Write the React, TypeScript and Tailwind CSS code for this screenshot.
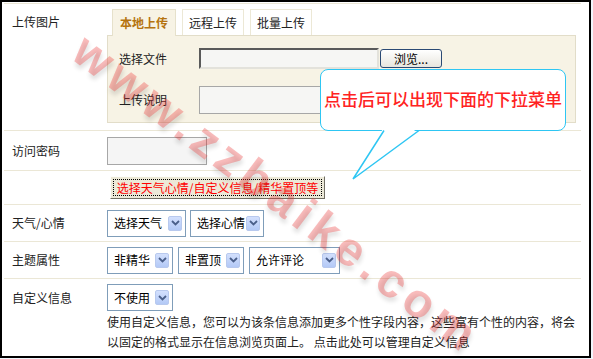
import React from "react";

const cjk = "font-['SimSun','Noto_Sans_CJK_SC',sans-serif]";

function Arrow() {
  return (
    <span className="flex h-[15px] w-[14px] shrink-0 items-center justify-center rounded-[2px] border border-[#b8c9ee] bg-gradient-to-b from-[#d3e0fd] to-[#b3c9f6]">
      <svg width="9" height="6" viewBox="0 0 9 6">
        <path d="M1 1 L4.5 4.5 L8 1" fill="none" stroke="#4a5f8a" strokeWidth="1.8" />
      </svg>
    </span>
  );
}

function Select({ label, w }: { label: string; w: string }) {
  return (
    <div className={`flex h-[27px] shrink-0 items-center justify-between gap-[1px] whitespace-nowrap border border-[#7f9db9] bg-white pl-[6px] pr-[3px] text-[12px] text-black ${w}`}>
      <span>{label}</span>
      <Arrow />
    </div>
  );
}

function Tab({ label, active }: { label: string; active?: boolean }) {
  if (active) {
    return (
      <div className="relative z-10 -mb-px flex h-[27px] items-center border border-b-0 border-[#e6e1cb] bg-[#f7f3e5] px-[7px] text-[12px] font-bold text-[#b5730f]">
        {label}
      </div>
    );
  }
  return (
    <div className="flex h-[26px] items-center border border-b-0 border-[#ece8d6] bg-white px-[6px] text-[12px] text-[#222]">
      {label}
    </div>
  );
}

export default function App() {
  return (
    <div className={`h-[359px] w-[593px] bg-[#f1f5fb] ${cjk}`}>
      <div className="relative h-[358px] w-[591px] overflow-hidden border-2 border-black bg-white pl-[2px] pt-px">
        <div className="w-[577px] border-t border-[#ebe7d6] text-[12px] text-[#222]">
          {/* 上传图片 */}
          <div className="flex border-b border-[#ebe7d6]">
            <div className="w-[103px] pl-[8px] pt-[9px]">上传图片</div>
            <div className="flex flex-col pb-[7px] pt-[5px]">
              <div className="ml-[5px] flex items-end gap-[6px]">
                <Tab label="本地上传" active />
                <Tab label="远程上传" />
                <Tab label="批量上传" />
              </div>
              <div className="flex h-[88px] w-[469px] flex-col gap-[17px] border border-[#e2ddc9] bg-[#f7f3e5] pl-[11px] pt-[12px]">
                <div className="flex items-center">
                  <span className="w-[80px]">选择文件</span>
                  <div className="h-[21px] w-[180px] border-2 border-b-[#e3e2db] border-l-[#5a5a5a] border-r-[#e3e2db] border-t-[#5a5a5a] bg-[#f6f6f4]" />
                  <div className="ml-[1px] flex h-[19px] w-[62px] items-center justify-center rounded-[3px] border border-[#2b4a74] bg-gradient-to-b from-white to-[#e8e6de] text-[12px] text-black">
                    浏览...
                  </div>
                </div>
                <div className="flex items-center">
                  <span className="w-[80px]">上传说明</span>
                  <div className="h-[28px] w-[220px] border border-[#a7a7a7] bg-[#f6f6f4]" />
                </div>
              </div>
            </div>
          </div>

          {/* 访问密码 */}
          <div className="flex h-[40px] items-center border-b border-[#ebe7d6]">
            <div className="w-[103px] pl-[8px]">访问密码</div>
            <div className="h-[28px] w-[100px] border border-[#a7a7a7] bg-[#f5f5f5]" />
          </div>

          {/* button */}
          <div className="flex h-[34px] items-center border-b border-[#ebe7d6]">
            <div className="w-[106px]" />
            <div className="flex h-[23px] w-[215px] items-center justify-center border border-b-[#716f64] border-l-[#fdfdfb] border-r-[#716f64] border-t-[#fdfdfb] bg-[#ece9d8] p-[2px]">
              <div className="flex h-full w-full items-center justify-center whitespace-nowrap border border-dotted border-black text-[12px] text-[#ff0000]">
                选择天气心情/自定义信息/精华置顶等
              </div>
            </div>
          </div>

          {/* 天气/心情 */}
          <div className="flex h-[37px] items-center border-b border-[#ebe7d6]">
            <div className="w-[103px] pl-[8px]">天气/心情</div>
            <div className="flex gap-[4px]">
              <Select label="选择天气" w="w-[79px]" />
              <Select label="选择心情" w="w-[74px]" />
            </div>
          </div>

          {/* 主题属性 */}
          <div className="flex h-[37px] items-center border-b border-[#ebe7d6]">
            <div className="w-[103px] pl-[8px]">主题属性</div>
            <div className="flex gap-[5px]">
              <Select label="非精华" w="w-[66px]" />
              <Select label="非置顶" w="w-[66px]" />
              <Select label="允许评论" w="w-[91px]" />
            </div>
          </div>

          {/* 自定义信息 */}
          <div className="flex flex-col pt-[5px]">
            <div className="flex items-center">
              <div className="w-[103px] pl-[8px]">自定义信息</div>
              <Select label="不使用" w="w-[66px]" />
            </div>
            <p className="ml-[103px] mt-[1px] whitespace-nowrap text-[12px] leading-[20px] text-[#222]">
              使用自定义信息，您可以为该条信息添加更多个性字段内容，这些富有个性的内容，将会
              <br />
              以固定的格式显示在信息浏览页面上。 点击此处可以管理自定义信息
            </p>
          </div>
        </div>

        {/* watermark */}
        <div className="pointer-events-none absolute left-[275px] top-[192px] -translate-x-1/2 -translate-y-1/2 rotate-[37deg] whitespace-nowrap font-['Liberation_Sans',sans-serif] text-[48px] font-bold tracking-[6px] text-[rgba(238,50,50,0.32)] [text-shadow:3px_3px_4px_rgba(0,0,0,0.12)]">
          www.zzbaike.com
        </div>

        {/* callout */}
        <div className="absolute left-[318px] top-[67px] flex h-[62px] w-[246px] items-center justify-center rounded-[8px] border-[1.5px] border-[#2ec6f3] bg-white pb-[2px] text-[17px] font-medium text-[#ff2222]">
          点击后可以出现下面的下拉菜单
        </div>
        <svg className="absolute left-[348px] top-[125px]" width="72" height="56" viewBox="0 0 72 56">
          <polygon points="34,0 69,0 3,52" fill="white" />
          <polyline points="34,3.5 3,52 69,3.5" fill="none" stroke="#2ec6f3" strokeWidth="1.5" />
        </svg>
      </div>
    </div>
  );
}
